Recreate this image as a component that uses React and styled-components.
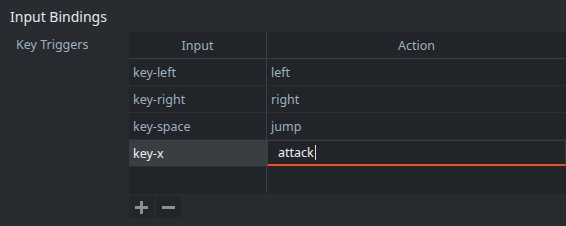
import React from "react";
import styled, { createGlobalStyle } from "styled-components";

const Global = createGlobalStyle`
  html, body { margin: 0; padding: 0; background: #272a2e; }
  body { font-family: "Noto Sans", "Open Sans", sans-serif; }
`;

const Page = styled.div`
  width: 566px;
  height: 226px;
  background: #272a2e;
  display: flex;
  flex-direction: column;
  overflow: hidden;
`;

const Title = styled.div`
  height: 32px;
  padding-left: 10px;
  display: flex;
  align-items: center;
  font-size: 14px;
  color: #e4e7ea;
  background: #282b2f;
`;

const Section = styled.div`
  display: flex;
  flex: 1;
`;

const Label = styled.div`
  width: 113px;
  padding: 4px 0 0 16px;
  font-size: 12.5px;
  color: #9eb0c2;
`;

const TableWrap = styled.div`
  flex: 1;
  display: flex;
  flex-direction: column;
`;

const Table = styled.div`
  background: #212428;
  display: grid;
  grid-template-columns: 138px 1fr;
  grid-auto-rows: 27px;
`;

const HeadCell = styled.div`
  display: flex;
  align-items: center;
  justify-content: center;
  font-size: 12.5px;
  color: #9eb0c2;
  border-bottom: 1px solid #3b3f44;
  border-right: ${(p) => (p.$first ? "1px solid #3b3f44" : "none")};
  box-sizing: border-box;
`;

const Cell = styled.div`
  display: flex;
  align-items: center;
  padding-left: 4px;
  font-size: 12.5px;
  color: ${(p) => (p.$active ? "#eef0f2" : "#9eb0c2")};
  background: ${(p) => (p.$active ? "#3a3e42" : "transparent")};
  border-bottom: 1px solid ${(p) => (p.$last ? "transparent" : "#2a2d31")};
  border-right: ${(p) => (p.$first ? "1px solid #3b3f44" : "none")};
  box-sizing: border-box;
`;

const EditCell = styled.div`
  display: flex;
  align-items: stretch;
  padding: 0 0 1px 0;
  box-sizing: border-box;
`;

const Editor = styled.div`
  flex: 1;
  display: flex;
  align-items: center;
  padding-left: 10px;
  font-size: 12.5px;
  color: #eef0f2;
  border: 1px solid #3b3f44;
  border-bottom: 2px solid #e8541c;
  background: #212428;
`;

const Caret = styled.span`
  display: inline-block;
  width: 1px;
  height: 15px;
  background: #d8dce0;
  margin-left: 1px;
`;

const Buttons = styled.div`
  display: flex;
  gap: 2px;
  margin-top: 2px;
`;

const IconButton = styled.button`
  width: 25px;
  height: 22px;
  border: none;
  padding: 0;
  background: #222529;
  display: flex;
  align-items: center;
  justify-content: center;
  cursor: pointer;
`;

const rows = [
  ["key-left", "left"],
  ["key-right", "right"],
  ["key-space", "jump"],
];

export default function App() {
  return (
    <>
      <Global />
      <Page>
        <Title>Input Bindings</Title>
        <Section>
          <Label>Key Triggers</Label>
          <TableWrap>
            <Table>
              <HeadCell $first>Input</HeadCell>
              <HeadCell>Action</HeadCell>
              {rows.map(([k, a]) => (
                <React.Fragment key={k}>
                  <Cell $first>{k}</Cell>
                  <Cell>{a}</Cell>
                </React.Fragment>
              ))}
              <Cell $first $active>key-x</Cell>
              <EditCell>
                <Editor>
                  attack
                  <Caret />
                </Editor>
              </EditCell>
              <Cell $first $last />
              <Cell $last />
            </Table>
            <Buttons>
              <IconButton aria-label="add">
                <svg width="13" height="13" viewBox="0 0 13 13">
                  <rect x="5" y="0" width="3" height="13" fill="#8a9096" />
                  <rect x="0" y="5" width="13" height="3" fill="#8a9096" />
                </svg>
              </IconButton>
              <IconButton aria-label="remove">
                <svg width="13" height="13" viewBox="0 0 13 13">
                  <rect x="0" y="5" width="13" height="3" fill="#8a9096" />
                </svg>
              </IconButton>
            </Buttons>
          </TableWrap>
        </Section>
      </Page>
    </>
  );
}
